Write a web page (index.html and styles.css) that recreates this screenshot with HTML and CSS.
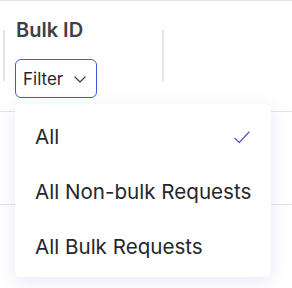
FILE: index.html
```html
<!DOCTYPE html>
<html lang="en">
<head>
    <meta charset="UTF-8">
    <meta name="viewport" content="width=device-width, initial-scale=1.0">
    <title>Bulk ID filter</title>
    <link rel="stylesheet" href="styles.css">
</head>
<body>
    <div class="table">
        <div class="head">
            <div class="divider"></div>
            <div class="cell">
                <div class="col-title">Bulk ID</div>
                <div class="filter-wrap">
                    <button class="filter-btn">
                        <span>Filter</span>
                        <svg class="chevron" width="12" height="7" viewBox="0 0 12 7">
                            <polyline points="1,1 6,6 11,1" fill="none" stroke="#3f3f46" stroke-width="1.2" stroke-linecap="round" stroke-linejoin="round"/>
                        </svg>
                    </button>
                    <div class="dropdown-menu">
                        <div class="menu-item selected">
                            <span>All</span>
                            <svg class="check" width="16" height="13" viewBox="0 0 16 13">
                                <polyline points="1,7.5 5.3,11.5 15,1" fill="none" stroke="#6e4fd6" stroke-width="1.3" stroke-linecap="round" stroke-linejoin="round"/>
                            </svg>
                        </div>
                        <div class="menu-item">All Non-bulk Requests</div>
                        <div class="menu-item">All Bulk Requests</div>
                    </div>
                </div>
            </div>
            <div class="divider"></div>
        </div>
        <div class="row"></div>
        <div class="row"></div>
    </div>
</body>
</html>
```

FILE: styles.css
```css
body {
    margin: 0;
    padding: 0;
    background-color: white;
    font-family: Inter, "Noto Sans", sans-serif;
    color: #27272a;
}
.table {
    border-top: 1px solid #e4e4e7;
}
.head {
    display: flex;
    align-items: flex-start;
    height: 110px;
    padding-left: 3px;
    border-bottom: 1px solid #e4e4e7;
}
.divider {
    width: 2px;
    height: 51px;
    margin-top: 29px;
    background-color: #e4e4e7;
}
.cell {
    width: 147px;
    padding: 17px 0 0 10px;
}
.col-title {
    font-size: 20px;
    line-height: 24px;
    font-weight: 600;
    color: #3f3f46;
    padding-left: 1px;
}
.filter-wrap {
    position: relative;
    margin-top: 17px;
}
.filter-btn {
    display: flex;
    align-items: center;
    gap: 11px;
    height: 39px;
    padding: 0 10px 0 7px;
    background-color: white;
    border: 1px solid #3b5bdb;
    border-radius: 6px;
    font-family: inherit;
    font-size: 17px;
    color: #27272a;
}
.chevron {
    display: block;
    margin-top: 1px;
}
.dropdown-menu {
    position: absolute;
    top: 45px; /* 6px under the button */
    left: 0;
    z-index: 10;
    width: 256px;
    padding: 5px 0 3px;
    background-color: white;
    border-radius: 6px;
    box-shadow: 0 4px 18px rgba(84, 64, 190, 0.13);
}
.menu-item {
    display: flex;
    align-items: center;
    justify-content: space-between;
    height: 55px;
    padding: 0 21px 0 20px;
    font-size: 20.6px;
    color: #27272a;
    white-space: nowrap;
}
.check {
    display: block;
    margin-top: 1px;
}
.row {
    height: 92px;
    border-bottom: 1px solid #e4e4e7;
}
```
